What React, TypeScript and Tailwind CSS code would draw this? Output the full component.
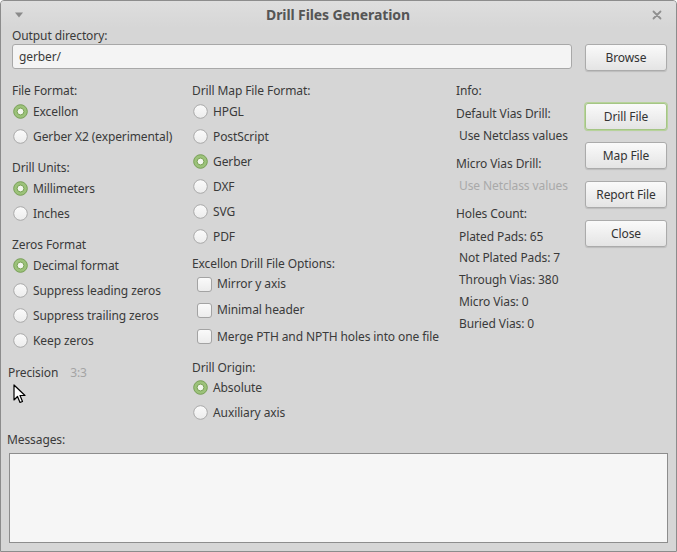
import React from "react";

function Radio({ checked, label }: { checked?: boolean; label: string }) {
  return (
    <div className="flex h-[25px] items-center">
      <svg width="15" height="15" viewBox="0 0 15 15" className="ml-[1px] shrink-0">
        <defs>
          <linearGradient id="rg" x1="0" y1="0" x2="0" y2="1">
            <stop offset="0" stopColor="#fbfbfb" />
            <stop offset="1" stopColor="#ececec" />
          </linearGradient>
        </defs>
        {checked ? (
          <>
            <circle cx="7.5" cy="7.5" r="6.8" fill="#9cc27a" stroke="#779f55" strokeWidth="1" />
            <circle cx="7.5" cy="7.5" r="3.4" fill="#f3f6ef" stroke="#6e9848" strokeWidth="0.9" />
          </>
        ) : (
          <circle cx="7.5" cy="7.5" r="6.8" fill="url(#rg)" stroke="#a9a9a9" strokeWidth="1" />
        )}
      </svg>
      <span className="ml-[5px] whitespace-nowrap">{label}</span>
    </div>
  );
}

function Check({ label, h }: { label: string; h: string }) {
  return (
    <div className={`flex items-center ${h}`}>
      <div className="ml-[5px] h-[15px] w-[15px] shrink-0 rounded-[3px] border border-[#a3a3a3] bg-gradient-to-b from-[#fafafa] to-[#ececec]" />
      <span className="ml-[5px] whitespace-nowrap">{label}</span>
    </div>
  );
}

function Btn({ label, focus }: { label: string; focus?: boolean }) {
  return (
    <div
      className={`flex h-[27px] w-[82px] items-center justify-center rounded-[3px] border bg-gradient-to-b from-[#fafafa] to-[#e4e4e4] text-[#333] shadow-[0_1px_1px_rgba(0,0,0,0.12)] ${
        focus ? "border-[#a5c585] ring-1 ring-[#b7d39b]" : "border-[#ababab]"
      }`}
    >
      {label}
    </div>
  );
}

export default function App() {
  return (
    <div className="relative h-[552px] w-[677px] overflow-hidden rounded-t-[4px] border border-[#8c8c8c] bg-[#d6d6d6] font-['Noto_Sans',sans-serif] text-[12px] leading-none tracking-[-0.1px] text-[#3a3a3a]">
      {/* title bar */}
      <div className="flex h-[27px] items-center bg-gradient-to-b from-[#dedede] to-[#d6d6d6] px-[12px]">
        <svg width="10" height="8" viewBox="0 0 10 8" className="ml-[1px]">
          <path d="M1 1.5 L9 1.5 L5 6.5 Z" fill="#8a8a8a" />
        </svg>
        <div className="flex-1 text-center text-[14px] font-bold tracking-[-0.1px] text-[#555]">Drill Files Generation</div>
        <svg width="10" height="10" viewBox="0 0 10 10" className="mr-[2px]">
          <path d="M1.5 1.5 L8.5 8.5 M8.5 1.5 L1.5 8.5" stroke="#8f8f8f" strokeWidth="1.8" strokeLinecap="round" />
        </svg>
      </div>

      {/* output dir */}
      <div className="pl-[11px] pr-[9px]">
        <div className="flex h-[15px] items-center">Output directory:</div>
        <div className="mt-[1px] flex items-start">
          <div className="flex h-[25px] flex-1 items-center rounded-[3px] border border-[#a8a8a8] bg-[#f4f4f4] pl-[6px]">gerber/</div>
          <div className="ml-[13px]">
            <Btn label="Browse" />
          </div>
        </div>
      </div>

      {/* main columns */}
      <div className="mt-[12px] flex pl-[11px]">
        {/* col1 */}
        <div className="w-[180px]">
          <div className="flex h-[16px] items-center">File Format:</div>
          <Radio checked label="Excellon" />
          <Radio label="Gerber X2 (experimental)" />
          <div className="mt-[11px] flex h-[16px] items-center">Drill Units:</div>
          <Radio checked label="Millimeters" />
          <Radio label="Inches" />
          <div className="mt-[11px] flex h-[16px] items-center">Zeros Format</div>
          <Radio checked label="Decimal format" />
          <Radio label="Suppress leading zeros" />
          <Radio label="Suppress trailing zeros" />
          <Radio label="Keep zeros" />
          <div className="-ml-[4px] mt-[12px] flex h-[16px] items-center">
            <span>Precision</span>
            <span className="ml-[12px] text-[#a4a4a4]">3:3</span>
          </div>
        </div>

        {/* col2 */}
        <div className="w-[264px]">
          <div className="flex h-[16px] items-center">Drill Map File Format:</div>
          <Radio label="HPGL" />
          <Radio label="PostScript" />
          <Radio checked label="Gerber" />
          <Radio label="DXF" />
          <Radio label="SVG" />
          <Radio label="PDF" />
          <div className="mt-[7px] flex h-[15px] items-center">Excellon Drill File Options:</div>
          <Check label="Mirror y axis" h="h-[26px]" />
          <Check label="Minimal header" h="h-[26px]" />
          <Check label="Merge PTH and NPTH holes into one file" h="h-[27px]" />
          <div className="mt-[10px] flex h-[15px] items-center">Drill Origin:</div>
          <Radio checked label="Absolute" />
          <Radio label="Auxiliary axis" />
        </div>

        {/* col3 */}
        <div className="w-[129px]">
          <div className="flex h-[16px] items-center">Info:</div>
          <div className="mt-[7px] flex h-[16px] items-center">Default Vias Drill:</div>
          <div className="mt-[6px] flex h-[16px] items-center pl-[3px]">Use Netclass values</div>
          <div className="mt-[12px] flex h-[16px] items-center">Micro Vias Drill:</div>
          <div className="mt-[6px] flex h-[16px] items-center pl-[3px] text-[#a9a9a9]">Use Netclass values</div>
          <div className="mt-[12px] flex h-[16px] items-center">Holes Count:</div>
          <div className="pl-[3px]">
            <div className="mt-[7px] flex h-[16px] items-center">Plated Pads: 65</div>
            <div className="mt-[5px] flex h-[16px] items-center">Not Plated Pads: 7</div>
            <div className="mt-[6px] flex h-[16px] items-center">Through Vias: 380</div>
            <div className="mt-[6px] flex h-[16px] items-center">Micro Vias: 0</div>
            <div className="mt-[6px] flex h-[16px] items-center">Buried Vias: 0</div>
          </div>
        </div>

        {/* col4 */}
        <div className="mt-[20px] flex flex-col gap-[12px]">
          <Btn label="Drill File" focus />
          <Btn label="Map File" />
          <Btn label="Report File" />
          <Btn label="Close" />
        </div>
      </div>

      {/* messages */}
      <div className="absolute bottom-[8px] left-[6px] right-[8px]">
        <div className="flex h-[17px] items-center">Messages:</div>
        <div className="ml-[2px] mt-[5px] h-[90px] border border-[#8d8d8d] bg-[#f6f6f6]" />
      </div>

      {/* mouse cursor */}
      <svg className="absolute left-[12px] top-[383px]" width="13" height="20" viewBox="0 0 13 20">
        <path d="M1 1 L1 16 L4.5 12.5 L7 18.5 L9.5 17.5 L7 11.5 L12 11.5 Z" fill="#ffffff" stroke="#000" strokeWidth="1.2" strokeLinejoin="round" />
      </svg>
    </div>
  );
}
